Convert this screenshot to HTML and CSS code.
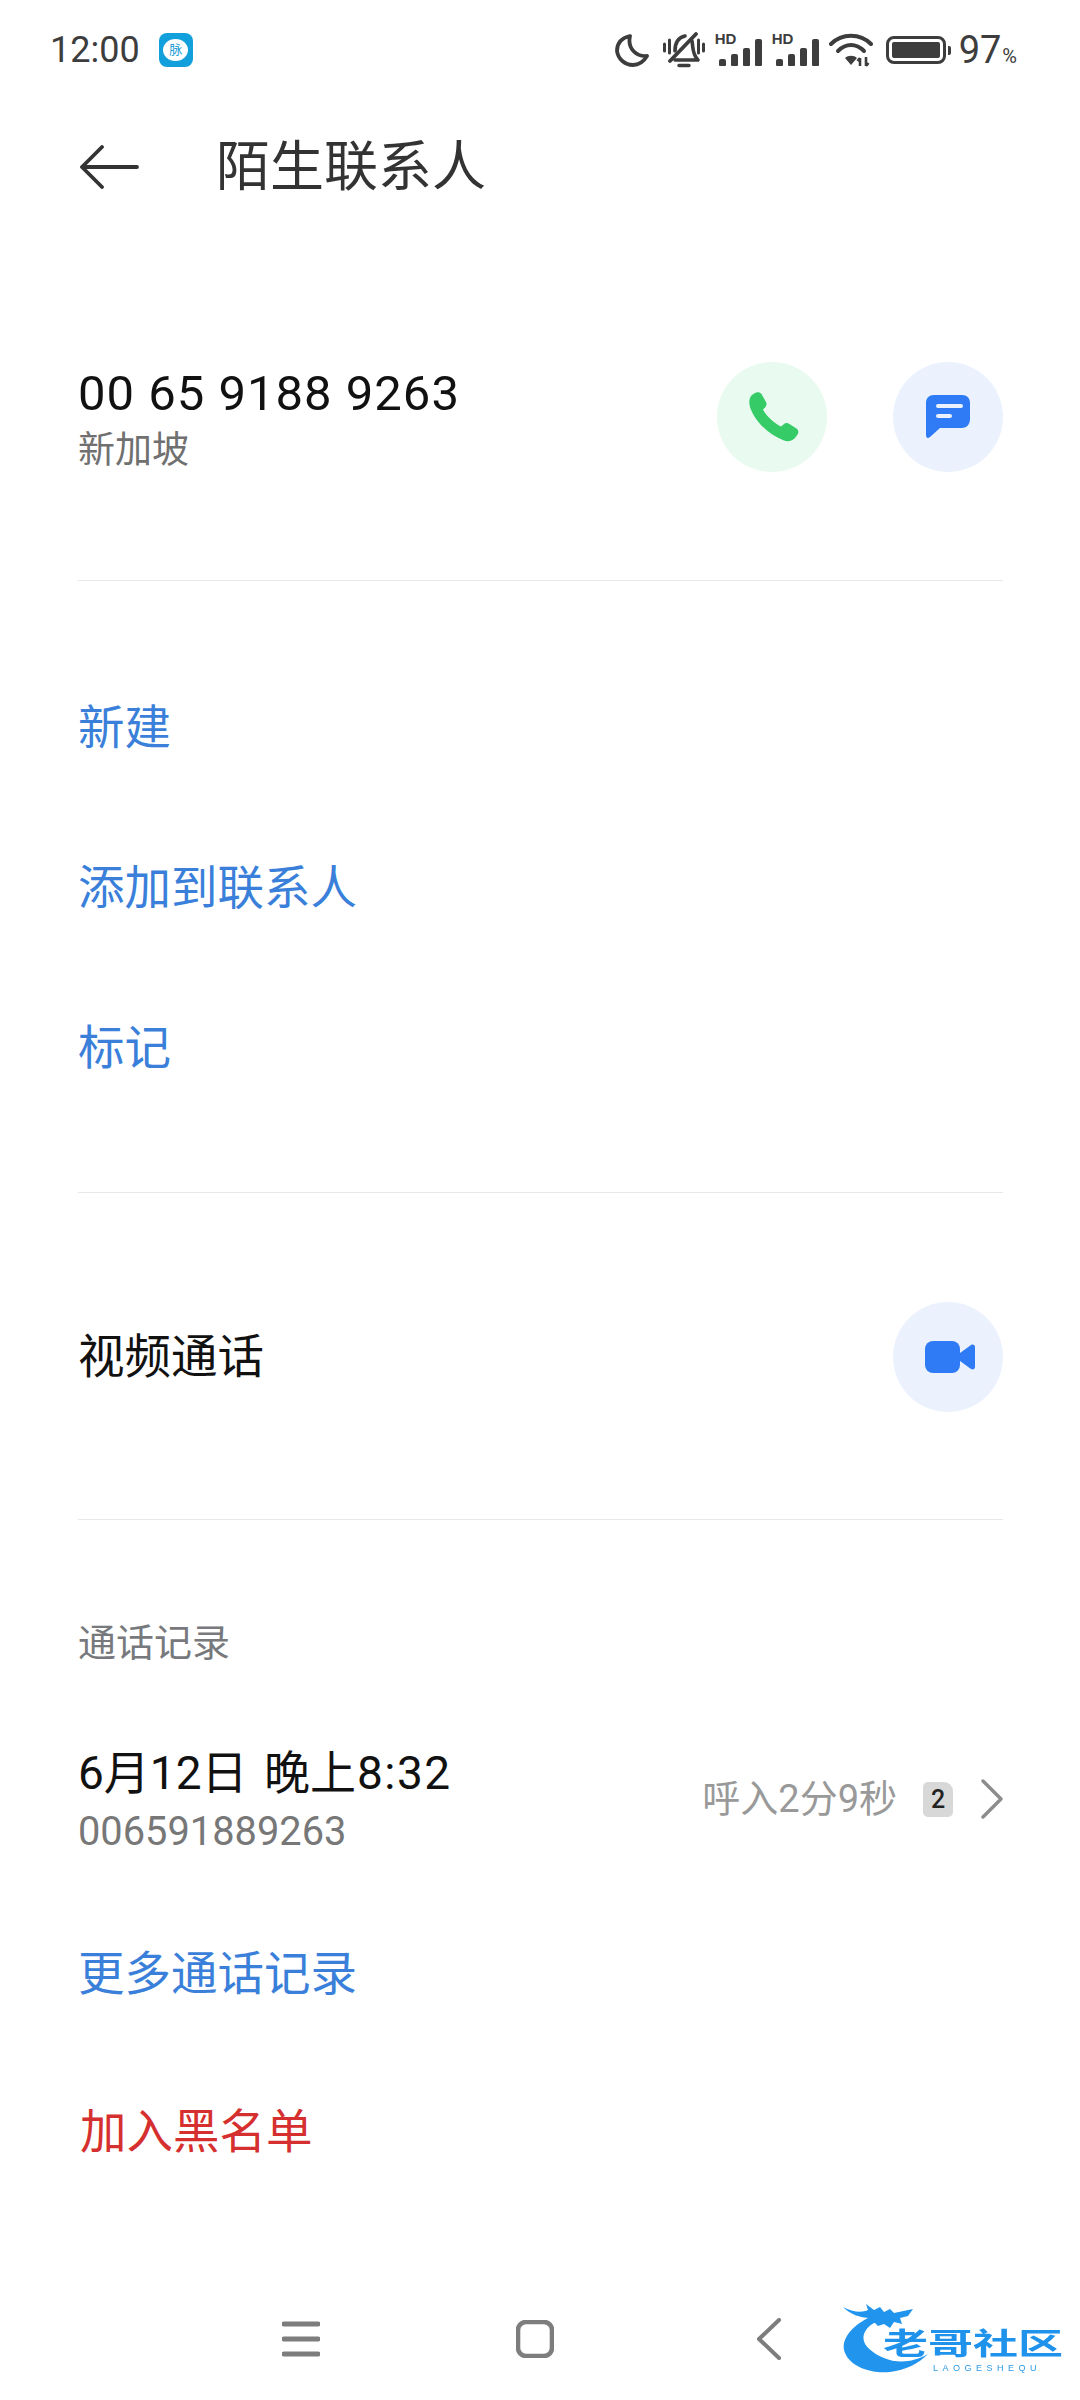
FILE: index.html
```html
<!DOCTYPE html>
<html lang="zh-CN">
<head>
  <meta charset="UTF-8">
  <meta name="viewport" content="width=device-width, initial-scale=1.0">
  <title>陌生联系人</title>
  <link rel="stylesheet" href="styles.css">
</head>
<body>
  <div class="page">
    <div class="status-bar">
      <div class="status-left">
        <span class="clock">12:00</span>
        <span class="app-badge">
          <span class="app-bubble">脉</span>
        </span>
      </div>
      <div class="status-right">
        <!-- moon -->
        <svg class="moon" width="34" height="34" viewBox="0 0 34 34"><path d="M15 3 C6 5 2 11 2 18 C3 26 10 32 18 32 C24 32 29 28 32 23 C22 24 12 16 15 3 Z" fill="none" stroke="#3d3d3d" stroke-width="3.8" stroke-linejoin="round"/></svg>
        <!-- muted bell -->
        <svg width="42" height="36" viewBox="0 0 42 36"><g fill="none" stroke="#3d3d3d" stroke-linecap="round"><path d="M1.5 12 V19 M6.5 8 V21 M35.5 8 V21 M40.5 12 V19" stroke-width="3"/><path d="M12 19 C12 14 13 6 22 4 M29 9 C30 14 29 22 35 28 H12" stroke-width="3.6" stroke-linejoin="round"/><path d="M7 29 L33 2" stroke-width="3.8"/><path d="M16 33.5 H26" stroke-width="3.4"/></g></svg>
        <!-- signal, twice -->
        <span class="signal">
          <span class="hd">HD</span>
          <span class="bars"><i class="b1"></i><i class="b2"></i><i class="b3"></i><i class="b4"></i></span>
        </span>
        <span class="signal">
          <span class="hd">HD</span>
          <span class="bars"><i class="b1"></i><i class="b2"></i><i class="b3"></i><i class="b4"></i></span>
        </span>
        <!-- wifi -->
        <svg width="44" height="34" viewBox="0 0 44 34"><g fill="none" stroke="#3d3d3d" stroke-linecap="round"><path d="M2 11 C13 0 31 0 42 11" stroke-width="4"/><path d="M9 18 C17 10 27 10 35 18" stroke-width="4"/></g><path d="M16 25 C19 22 25 22 28 25 L22 32 Z" fill="#3d3d3d"/><path d="M31 33 V25 M28.5 28 L31 25 M37 24 V33 M37 33 L39.5 30" fill="none" stroke="#3d3d3d" stroke-width="2.6"/></svg>
        <span class="battery"><span class="battery-fill"></span></span>
        <span class="battery-nub"></span>
        <span class="percent">97<small>%</small></span>
      </div>
    </div>

    <div class="title-bar">
      <svg class="back" width="60" height="44" viewBox="0 0 60 44"><path d="M58 22 H3 M23 2 L3 22 L23 42" fill="none" stroke="#333" stroke-width="3.8" stroke-linecap="round" stroke-linejoin="round"/></svg>
      <h1>陌生联系人</h1>
    </div>

    <div class="section contact">
      <div class="contact-info">
        <div class="number">00 65 9188 9263</div>
        <div class="region">新加坡</div>
      </div>
      <div class="round-btn green">
        <svg class="phone-icon" width="50" height="50" viewBox="0 0 50 50"><path d="M6 1 C8 -0.5 11 0 12.5 2 L17 10 C18 12 17.5 14 16 15.5 L14 17.5 C16.5 23 26 32 32 34.5 L34.5 32.5 C36 31 38 30.5 40 31.8 L47.5 36.5 C49.5 38 50 40.5 48.5 42.5 L46 46 C43.5 49 39 50 35 48.5 C20 43 6 30 1 15 C-0.5 10 0.5 5 3 3 Z" fill="#35cb66"/></svg>
      </div>
      <div class="round-btn blue">
        <svg width="44" height="44" viewBox="0 0 44 44"><path d="M8 0 H36 C41 0 44 3 44 8 V24 C44 29 41 33 36 33 H14 L4 42 C2 44 0 43 0 40 V8 C0 3 3 0 8 0 Z" fill="#2f7bf6"/><path d="M12 11 H35 M12 21 H24" stroke="#ebf2fe" stroke-width="4" stroke-linecap="round"/></svg>
      </div>
    </div>

    <div class="section actions">
      <div class="action">新建</div>
      <div class="action">添加到联系人</div>
      <div class="action">标记</div>
    </div>

    <div class="section video">
      <div class="video-label">视频通话</div>
      <div class="round-btn blue">
        <svg class="camera-icon" width="50" height="32" viewBox="0 0 50 32"><rect x="0" y="0" width="35" height="32" rx="8" fill="#2f7bf6"/><path d="M35 12 L46 4 C48 3 50 4 50 6 V26 C50 28 48 29 46 28 L35 20 Z" fill="#2f7bf6"/></svg>
      </div>
    </div>

    <div class="log">
      <div class="log-title">通话记录</div>
      <div class="log-row">
        <div class="log-left">
          <div class="log-date">6月12日 晚上<span class="log-time">8:32</span></div>
          <div class="log-number">006591889263</div>
        </div>
        <div class="log-right">
          <span class="log-detail">呼入2分9秒</span>
          <span class="sim">2</span>
          <svg width="22" height="40" viewBox="0 0 22 40"><path d="M2 2 L20 20 L2 38" fill="none" stroke="#8c8c8c" stroke-width="3.4" stroke-linecap="round" stroke-linejoin="round"/></svg>
        </div>
      </div>
      <div class="action more">更多通话记录</div>
      <div class="action danger">加入黑名单</div>
    </div>

    <div class="nav-bar">
      <svg width="38" height="36" viewBox="0 0 38 36"><path d="M2 3 H36 M2 18 H36 M2 33 H36" stroke="#7d7d7d" stroke-width="5" stroke-linecap="round"/></svg>
      <svg width="38" height="38" viewBox="0 0 38 38"><rect x="2" y="2" width="34" height="34" rx="8" fill="none" stroke="#7d7d7d" stroke-width="4.6"/></svg>
      <svg width="38" height="42" viewBox="0 0 38 42"><path d="M29 2 L9 21 L29 40" fill="none" stroke="#7d7d7d" stroke-width="4" stroke-linecap="round" stroke-linejoin="round"/></svg>
    </div>

    <!-- site stamp over the navigation bar -->
    <div class="stamp">
      <svg class="stamp-ring" width="96" height="72" viewBox="0 0 96 72">
        <path d="M32 12 C10 22 2 36 4 46 C8 62 30 70 50 68 C66 66 78 60 88 50 C74 58 58 60 44 54 C30 48 18 38 26 26 C30 20 36 18 42 16 Z" fill="#2195ee"/>
        <path d="M3 3 C12 8 22 9 28 6 L26 0 L34 6 L40 3 L44 8 L50 5 L54 9 L73 5 L68 12 L60 14 L62 20 L54 18 L50 24 L44 20 L38 22 L30 14 C20 14 10 10 3 3 Z" fill="#2195ee"/>
      </svg>
      <span class="stamp-name">老哥社区</span>
      <span class="stamp-sub">LAOGESHEQU</span>
    </div>
  </div>
</body>
</html>
```

FILE: styles.css
```css
* {
  box-sizing: border-box;
}
body {
  margin: 0;
  background: #fff;
  font-family: Roboto, "Noto Sans CJK SC", sans-serif;
  color: #111;
}
.page {
  position: relative;
  width: 1080px;
  height: 2400px;
  overflow: hidden;
  display: flex;
  flex-direction: column;
}

/* status bar */
.status-bar {
  height: 100px;
  padding: 0 63px 0 50px;
  display: flex;
  align-items: center;
  justify-content: space-between;
  color: #3d3d3d;
}
.status-left {
  display: flex;
  align-items: center;
  gap: 19px;
}
.clock {
  font-size: 36px;
}
.app-badge {
  width: 34px;
  height: 34px;
  border-radius: 8px;
  background: #12a0dc;
  display: flex;
  align-items: center;
  justify-content: center;
}
.app-bubble {
  width: 25px;
  height: 22px;
  border-radius: 50%;
  background: #fff;
  color: #2a9fd8;
  font-size: 13px;
  line-height: 22px;
  text-align: center;
}
.status-right {
  display: flex;
  align-items: center;
  gap: 10px;
}
.moon {
  margin-right: 4px;
}
.signal {
  position: relative;
  width: 47px;
  height: 32px;
  display: block;
}
.hd {
  position: absolute;
  left: 0;
  top: -2px;
  font: bold 15px/14px "Liberation Sans", sans-serif;
  color: #3d3d3d;
}
.bars {
  height: 28px;
  display: flex;
  align-items: flex-end;
  justify-content: flex-end;
  gap: 5px;
  margin-top: 4px;
}
.bars i {
  width: 7px;
  background: #3d3d3d;
  border-radius: 2px 2px 1px 1px;
}
.b1 { height: 7px; }
.b2 { height: 12px; }
.b3 { height: 18px; }
.b4 { height: 27px; }
.battery {
  width: 60px;
  height: 28px;
  border: 3px solid #3d3d3d;
  border-radius: 8px;
  padding: 3px;
  margin-left: 3px;
  display: block;
}
.battery-fill {
  display: block;
  height: 100%;
  border-radius: 2px;
  background: #3d3d3d;
}
.battery-nub {
  width: 3px;
  height: 9px;
  margin-left: -8px;
  background: #3d3d3d;
  border-radius: 0 2px 2px 0;
}
.percent {
  font-size: 38px;
  margin-left: -2px;
}
.percent small {
  font-size: 20px;
  margin-left: 1px;
}

/* title */
.title-bar {
  height: 134px;
  padding-left: 79px;
  display: flex;
  align-items: center;
}
.title-bar h1 {
  margin: 2px 0 0 77px;
  font-size: 54px;
  font-weight: 400;
  color: #333;
  line-height: 1;
}

/* sections */
.section {
  margin: 0 77px 0 78px;
  border-bottom: 1px solid #e8e8e8;
}
.round-btn {
  width: 110px;
  height: 110px;
  border-radius: 50%;
  flex-shrink: 0;
  display: flex;
  align-items: center;
  justify-content: center;
}
.round-btn.green {
  background: #e9faf0;
}
.round-btn.blue {
  background: #ebf2fe;
}
.phone-icon {
  margin-left: 3px;
}
.camera-icon {
  margin-left: 4px;
}
.contact {
  height: 347px;
  padding-top: 128px;
  display: flex;
  align-items: flex-start;
  gap: 66px;
}
.contact-info {
  flex: 1;
  margin-top: 3px;
}
.number {
  font-size: 49px;
  line-height: 57px;
  letter-spacing: 1px;
}
.region {
  font-size: 37px;
  line-height: 57px;
  color: #707070;
}
.actions {
  height: 612px;
  padding-top: 62px;
}
.action {
  height: 160px;
  display: flex;
  align-items: center;
  font-size: 46.5px;
  color: #3a7fd9;
}
.video {
  height: 327px;
  padding-top: 109px;
  display: flex;
  align-items: flex-start;
  justify-content: space-between;
}
.video-label {
  font-size: 46.5px;
  line-height: 110px;
}

/* call log */
.log {
  margin: 0 77px 0 78px;
  padding-top: 98px;
}
.log-title {
  font-size: 38px;
  line-height: 50px;
  color: #77797d;
}
.log-row {
  margin-top: 77px;
  display: flex;
  align-items: center;
  justify-content: space-between;
}
.log-date {
  font-size: 46px;
  line-height: 57px;
  word-spacing: 5px;
}
.log-time {
  letter-spacing: 1.5px;
  margin-left: 1px;
}
.log-number {
  font-size: 39.8px;
  line-height: 59px;
  color: #777;
}
.log-right {
  display: flex;
  align-items: center;
  margin-bottom: 8px;
}
.log-detail {
  font-size: 38px;
  color: #999;
  margin-bottom: 7px;
}
.sim {
  width: 30px;
  height: 35px;
  margin: 0 28px 0 26px;
  background: #d8d8d8;
  border-radius: 5px 9px 5px 5px;
  font: 500 25px/35px Roboto, sans-serif;
  text-align: center;
  color: #222;
}
.more {
  margin-top: 28px;
}
.danger {
  color: #d5302f;
  margin-top: -2px;
  padding-left: 2px;
}

/* navigation bar */
.nav-bar {
  margin-top: auto;
  height: 130px;
  padding: 8px 0 0 282px;
  display: flex;
  align-items: center;
  gap: 196px;
}

/* the stamp is soft-edged, it sits on the bar as a small scaled mark */
.stamp {
  position: absolute;
  left: 840px;
  top: 2304px;
  width: 230px;
  height: 92px;
  filter: blur(0.6px);
}
.stamp-ring {
  position: absolute;
  left: 0;
  top: 0;
}
.stamp-name {
  position: absolute;
  left: 43px;
  top: 22px;
  font: bold 30px/30px "Noto Sans CJK SC", sans-serif;
  color: #1f93ec;
  white-space: nowrap;
  transform: scaleX(1.5);
  transform-origin: left center;
}
.stamp-sub {
  position: absolute;
  left: 93px;
  top: 60px;
  font: 9px/8px "Liberation Sans", sans-serif;
  letter-spacing: 4.5px;
  color: #2a9bea;
}
```
